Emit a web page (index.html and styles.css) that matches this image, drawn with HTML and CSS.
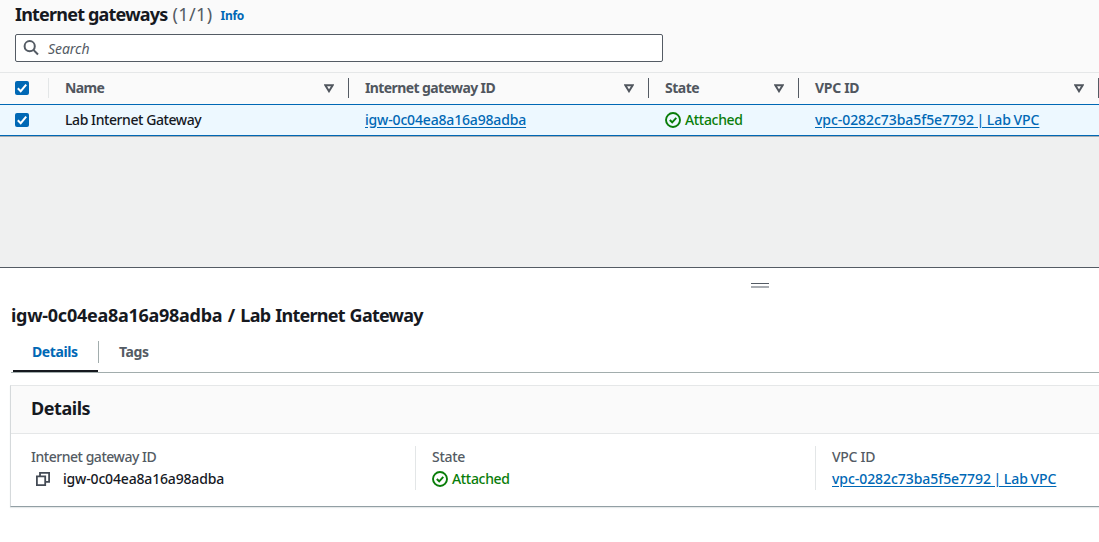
FILE: index.html
```html
<!DOCTYPE html>
<html lang="en">
<head>
<meta charset="utf-8">
<title>Internet gateways</title>
<link rel="stylesheet" href="styles.css">
</head>
<body>
<svg class="defs" aria-hidden="true">
  <symbol id="ok" viewBox="0 0 16 16"><circle cx="8" cy="8" r="7"/><path d="M4.8 8 7.2 10.3 11.3 5.8"/></symbol>
  <symbol id="sort" viewBox="0 0 10 9"><path d="M1.3 1.2h7.4L5 7.2z"/></symbol>
  <symbol id="check" viewBox="0 0 14 14"><path d="M2.8 7.3 5.7 10.2 11.2 3.6"/></symbol>
</svg>
<section class="list">
  <div class="toolbar">
    <header class="list-head">
      <h1 class="title">Internet gateways</h1>
      <span class="count">(1/1)</span>
      <a class="info">Info</a>
    </header>
    <div class="search">
      <svg class="search-icon" viewBox="0 0 16 16"><circle cx="6.7" cy="6.2" r="5.1"/><path d="M10.4 9.9 15 14.5"/></svg>
      <span class="placeholder">Search</span>
    </div>
  </div>
  <div class="row columns">
    <div class="cell select"><span class="checkbox"><svg><use href="#check"/></svg></span></div>
    <div class="cell"><span class="h-name">Name</span><svg class="sort"><use href="#sort"/></svg></div>
    <div class="cell"><span class="h-id">Internet gateway ID</span><svg class="sort"><use href="#sort"/></svg></div>
    <div class="cell"><span class="h-state">State</span><svg class="sort"><use href="#sort"/></svg></div>
    <div class="cell"><span class="h-vpc">VPC ID</span><svg class="sort"><use href="#sort"/></svg></div>
  </div>
  <div class="row record">
    <div class="cell select"><span class="checkbox"><svg><use href="#check"/></svg></span></div>
    <div class="cell"><span class="name">Lab Internet Gateway</span></div>
    <div class="cell"><a class="link igw">igw-0c04ea8a16a98adba</a></div>
    <div class="cell"><span class="status"><svg><use href="#ok"/></svg><span>Attached</span></span></div>
    <div class="cell"><a class="link vpc">vpc-0282c73ba5f5e7792 | Lab VPC</a></div>
  </div>
</section>
<section class="panel">
  <div class="handle"></div>
  <h2 class="panel-title">igw-0c04ea8a16a98adba / <span class="panel-name">Lab Internet Gateway</span></h2>
  <nav class="tabs">
    <a class="tab active">Details</a>
    <a class="tab">Tags</a>
  </nav>
  <article class="card">
    <h3 class="card-head">Details</h3>
    <div class="fields">
      <div class="field">
        <span class="label l-id">Internet gateway ID</span>
        <span class="value"><svg class="copy" viewBox="0 0 16 16"><path d="M1.9 5.4h8.3v8.7H1.9z"/><path d="M5 5.2V1.9h9.1v9h-3.6"/></svg><span class="igw">igw-0c04ea8a16a98adba</span></span>
      </div>
      <div class="field">
        <span class="label l-state">State</span>
        <span class="status"><svg><use href="#ok"/></svg><span>Attached</span></span>
      </div>
      <div class="field">
        <span class="label l-vpc">VPC ID</span>
        <a class="link vpc">vpc-0282c73ba5f5e7792 | Lab VPC</a>
      </div>
    </div>
  </article>
</section>
</body>
</html>
```
FILE: styles.css
```css
* { box-sizing: border-box; }
body {
  margin: 0;
  height: 542px;
  overflow: hidden;
  display: flex;
  flex-direction: column;
  font: 500 14px/22px "Noto Sans", "Open Sans", sans-serif;
  color: #16191f;
  background: #fff;
  white-space: nowrap;
}
h1, h2, h3 { margin: 0; font-weight: 700; }
svg { fill: none; stroke: currentColor; display: block; flex: none; }
.defs { display: none; }

/* Gateway table */
.list { height: 267px; background: #eff0f0; flex: none; }
.toolbar { height: 72px; padding: 0 15px; background: #fafafa; }
.list-head { height: 34px; padding-top: 3px; display: flex; }
.title { font-size: 18px; letter-spacing: -.8px; }
.count { font-size: 18px; color: #545b64; margin-left: 5px; font-weight: 400; letter-spacing: .4px; }
.info { font-size: 12px; font-weight: 700; color: #0068b5; margin-left: 8px; padding-top: 2px; letter-spacing: -.3px; }
.search {
  height: 28px;
  width: 648px;
  border: 1px solid #545b64;
  border-radius: 2px;
  background: #fff;
  display: flex;
  align-items: center;
  padding-left: 7px;
  color: #545b64;
}
.search-icon { width: 16px; height: 16px; stroke-width: 2; }
.placeholder { font-style: italic; font-weight: 400; margin-left: 9px; padding-top: 1px; letter-spacing: -.05px; }
.row { display: grid; grid-template-columns: 50px 300px 300px 150px 300px; align-items: center; }
.columns {
  height: 32px;
  padding-bottom: 1px;
  border-top: 1px solid #e5e7e8;
  background: #fafafa;
  font-weight: 700;
  color: #50565e;
}
.record {
  height: 32px;
  border-top: 1px solid #0068b5;
  border-bottom: 1px solid #0068b5;
  background: #edf8ff;
  box-shadow: 0 1px 0 #a8aeb2;
}
.cell { padding: 0 15px; display: flex; align-items: center; justify-content: space-between; height: 20px; }
.columns .cell { border-right: 1px solid #545b64; width: calc(100% - 1px); padding-right: 14px; }
.columns .select { border-color: #e3e6e7; }
.h-name, .h-id { letter-spacing: -.6px; }
.h-state { letter-spacing: -.5px; }
.h-vpc { letter-spacing: -.3px; }
.name { letter-spacing: -.42px; }
.igw { letter-spacing: -.17px; }
.vpc { letter-spacing: -.06px; word-spacing: -.9px; }
.sort { width: 10px; height: 9px; stroke-width: 2; }
.checkbox { width: 14px; height: 14px; background: #0068b5; border-radius: 2px; color: #fff; }
.checkbox svg { width: 14px; height: 14px; stroke-width: 2; }
.link { color: #0068b5; text-decoration: underline; text-underline-offset: 2px; }
.status { display: flex; align-items: center; gap: 4px; color: #097d09; letter-spacing: -.33px; }
.status svg { width: 16px; height: 16px; stroke-width: 1.9; }

/* Split panel */
.panel { height: 275px; border-top: 1px solid #545b64; }
.handle { width: 18px; height: 5px; margin: 15px 0 0 751px; border-top: 1px solid #545b64; border-bottom: 2px solid #a9adb2; }
.panel-title { margin: 16px 0 0 11px; font-size: 18px; line-height: 22px; letter-spacing: -.27px; word-spacing: 1px; }
.panel-name { letter-spacing: -.76px; }
.tabs { display: flex; height: 38px; margin: 9px 0 0 11px; border-bottom: 1px solid #a2adad; font-weight: 700; letter-spacing: -.4px; }
.tab { color: #545b64; padding: 6px 21px 0; }
.tab.active { color: #0068b5; height: 37px; margin-left: 2px; width: 85px; padding-left: 19px; border-bottom: 2px solid #16191f; position: relative; }
.tab.active::after { content: ""; position: absolute; right: -1px; top: 6px; width: 1px; height: 22px; background: #a2adad; }
.card { margin: 12px 0 0 10px; height: 122px; border: 1px solid #e5e7e8; border-left-color: #d5d9db; border-right: 0; border-bottom-color: #929fa4; box-shadow: 0 1px 1px #e6e9ea; }
.card-head { height: 48px; padding: 11px 20px 0; background: #fafafa; border-bottom: 1px solid #e5e7e8; font-size: 18px; line-height: 22px; letter-spacing: -.45px; }
.fields { display: grid; grid-template-columns: 400px 400px 288px; padding-top: 12px; margin-left: 4px; }
.field { height: 44px; display: flex; flex-direction: column; align-items: flex-start; padding-left: 16px; border-left: 1px solid #e3e6e7; }
.field:first-child { border: 0; }
.label { color: #545b64; }
.l-id { letter-spacing: -.47px; }
.l-state, .l-vpc { letter-spacing: -.3px; }
.value { display: flex; align-items: center; }
.copy { width: 16px; height: 16px; margin: 0 12px 0 4px; stroke-width: 1.8; color: #444b55; }
```
